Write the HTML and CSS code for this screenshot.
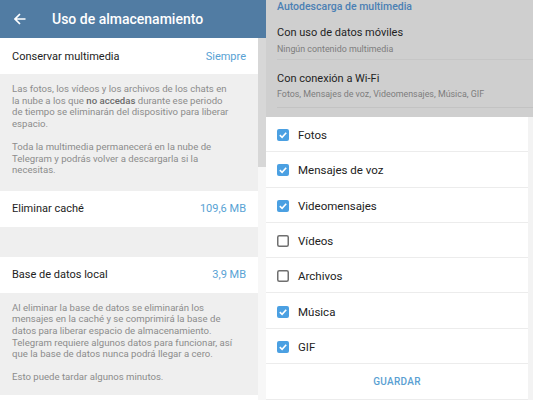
FILE: index.html
```html
<!DOCTYPE html>
<html>
<head>
  <title>Uso de almacenamiento</title>
  <link rel="stylesheet" href="styles.css">
</head>
<body>

  <div class="screen">

    <!-- Storage usage screen -->
    <div class="left">
      <div class="app-bar">
        <svg class="back" width="12" height="12" viewBox="0 0 12 12">
          <path d="M11.5 6H1M6 1L1 6l5 5" fill="none" stroke="#fff" stroke-width="1.7"/>
        </svg>
        <h1>Uso de almacenamiento</h1>
      </div>

      <div class="left-body">
        <div class="content">
          <div class="row">
            <span>Conservar multimedia</span>
            <span class="value">Siempre</span>
          </div>
          <div class="info first">
            <p>Las fotos, los vídeos y los archivos de los chats en<br>la nube a los que <strong>no accedas</strong> durante ese periodo<br>de tiempo se eliminarán del dispositivo para liberar<br>espacio.</p>
            <p>Toda la multimedia permanecerá en la nube de<br>Telegram y podrás volver a descargarla si la<br>necesitas.</p>
          </div>
          <div class="row">
            <span>Eliminar caché</span>
            <span class="value">109,6 MB</span>
          </div>
          <div class="spacer"></div>
          <div class="row">
            <span>Base de datos local</span>
            <span class="value">3,9 MB</span>
          </div>
          <div class="info">
            <p>Al eliminar la base de datos se eliminarán los<br>mensajes en la caché y se comprimirá la base de<br>datos para liberar espacio de almacenamiento.<br>Telegram requiere algunos datos para funcionar, así<br>que la base de datos nunca podrá llegar a cero.</p>
            <p>Esto puede tardar algunos minutos.</p>
          </div>
        </div>
        <div class="gutter"></div>
      </div>
    </div>

    <!-- Auto download settings with dialog -->
    <div class="right">
      <div class="backdrop">
        <div class="section-title">Autodescarga de multimedia</div>
        <div class="setting first">
          <div class="setting-title">Con uso de datos móviles</div>
          <div class="setting-sub">Ningún contenido multimedia</div>
        </div>
        <div class="setting second">
          <div class="setting-title">Con conexión a Wi-Fi</div>
          <div class="setting-sub">Fotos, Mensajes de voz, Videomensajes, Música, GIF</div>
        </div>
      </div>

      <div class="dialog-area">
        <div class="dialog">
          <div class="check-row">
            <svg class="box" width="12" height="12" viewBox="0 0 12 12"><rect width="12" height="12" rx="2" fill="#4ba0e2"/><path d="M2.8 6.2l2.3 2.2 4.1-4.6" fill="none" stroke="#fff" stroke-width="1.6"/></svg>
            <span>Fotos</span>
          </div>
          <div class="check-row">
            <svg class="box" width="12" height="12" viewBox="0 0 12 12"><rect width="12" height="12" rx="2" fill="#4ba0e2"/><path d="M2.8 6.2l2.3 2.2 4.1-4.6" fill="none" stroke="#fff" stroke-width="1.6"/></svg>
            <span>Mensajes de voz</span>
          </div>
          <div class="check-row">
            <svg class="box" width="12" height="12" viewBox="0 0 12 12"><rect width="12" height="12" rx="2" fill="#4ba0e2"/><path d="M2.8 6.2l2.3 2.2 4.1-4.6" fill="none" stroke="#fff" stroke-width="1.6"/></svg>
            <span>Videomensajes</span>
          </div>
          <div class="check-row">
            <svg class="box" width="12" height="12" viewBox="0 0 12 12"><rect x="0.75" y="0.75" width="10.5" height="10.5" rx="1.5" fill="none" stroke="#6f6f6f" stroke-width="1.5"/></svg>
            <span>Vídeos</span>
          </div>
          <div class="check-row">
            <svg class="box" width="12" height="12" viewBox="0 0 12 12"><rect x="0.75" y="0.75" width="10.5" height="10.5" rx="1.5" fill="none" stroke="#6f6f6f" stroke-width="1.5"/></svg>
            <span>Archivos</span>
          </div>
          <div class="check-row">
            <svg class="box" width="12" height="12" viewBox="0 0 12 12"><rect width="12" height="12" rx="2" fill="#4ba0e2"/><path d="M2.8 6.2l2.3 2.2 4.1-4.6" fill="none" stroke="#fff" stroke-width="1.6"/></svg>
            <span>Música</span>
          </div>
          <div class="check-row">
            <svg class="box" width="12" height="12" viewBox="0 0 12 12"><rect width="12" height="12" rx="2" fill="#4ba0e2"/><path d="M2.8 6.2l2.3 2.2 4.1-4.6" fill="none" stroke="#fff" stroke-width="1.6"/></svg>
            <span>GIF</span>
          </div>
          <div class="save">GUARDAR</div>
        </div>
        <div class="edge"></div>
      </div>
    </div>

  </div>

</body>
</html>
```

FILE: styles.css
```css
* {
  box-sizing: border-box;
}

body {
  margin: 0;
  width: 533px;
  height: 400px;
  overflow: hidden;
  background-color: #ffffff;
  font-family: Roboto, "Liberation Sans", sans-serif;
  color: #222222;
}

.screen {
  display: flex;
  height: 400px;
}

/* Left screen */
.left {
  width: 266px;
  display: flex;
  flex-direction: column;
}

.app-bar {
  height: 38px;
  background-color: #517ca3;
  display: flex;
  align-items: center;
  padding-left: 14px;
  gap: 26px;
}

.app-bar h1 {
  margin: 0;
  color: #ffffff;
  font-size: 14px;
  font-weight: 500;
}

.left-body {
  flex: 1;
  display: flex;
}

.content {
  width: 258px;
}

.gutter {
  flex: 1;
  background: linear-gradient(#d7d7d7 0, #d7d7d7 129px, #f7f7f7 129px);
}

.row {
  height: 36px;
  background-color: #ffffff;
  display: flex;
  align-items: center;
  justify-content: space-between;
  padding: 0 12px;
  font-size: 11px;
}

.value {
  color: #58a2d4;
}

.info {
  background-color: #efefef;
  padding: 9px 12px 12px;
  font-size: 9.6px;
  line-height: 11.6px;
  color: #8c8c8c;
  white-space: nowrap;
}

.info.first {
  padding-bottom: 15px;
}

.info p {
  margin: 0;
}

.info p + p {
  margin-top: 11.6px;
}

.info strong {
  font-weight: 500;
  color: #6a6a6a;
}

.spacer {
  height: 30px;
  background-color: #efefef;
}

/* Right screen */
.right {
  flex: 1;
  display: flex;
  flex-direction: column;
}

.backdrop {
  height: 117px;
  background-color: #cfcfcf;
  padding-left: 11px;
}

.section-title {
  height: 14px;
  line-height: 14px;
  font-size: 10.5px;
  font-weight: 500;
  color: #4b80b4;
}

.setting-title {
  font-size: 11px;
  line-height: 14px;
  color: #1f1f1f;
}

.setting-sub {
  font-size: 8.9px;
  line-height: 12px;
  color: #7d7d7d;
}

.setting.first {
  padding: 12px 0 4px;
  border-bottom: 1px solid #c6c6c6;
}

.setting.first .setting-sub {
  margin-top: 3px;
}

.setting.second {
  padding: 12px 0 7px;
  border-bottom: 1px solid #c3c3c3;
}

.setting.second .setting-sub {
  margin-top: 2px;
}

.dialog-area {
  flex: 1;
  display: flex;
}

.dialog {
  width: 262px;
  background-color: #ffffff;
}

.edge {
  flex: 1;
  background-color: #f3f3f3;
}

.check-row {
  height: 35.3px;
  display: flex;
  align-items: center;
  gap: 9px;
  padding-left: 11px;
  padding-top: 2px;
  border-bottom: 1px solid #ececec;
  font-size: 11.5px;
}

.save {
  height: 36px;
  display: flex;
  align-items: center;
  justify-content: center;
  border-bottom: 1px solid #ececec;
  font-size: 10px;
  font-weight: 500;
  letter-spacing: 0.3px;
  color: #5a9fd2;
}
```
